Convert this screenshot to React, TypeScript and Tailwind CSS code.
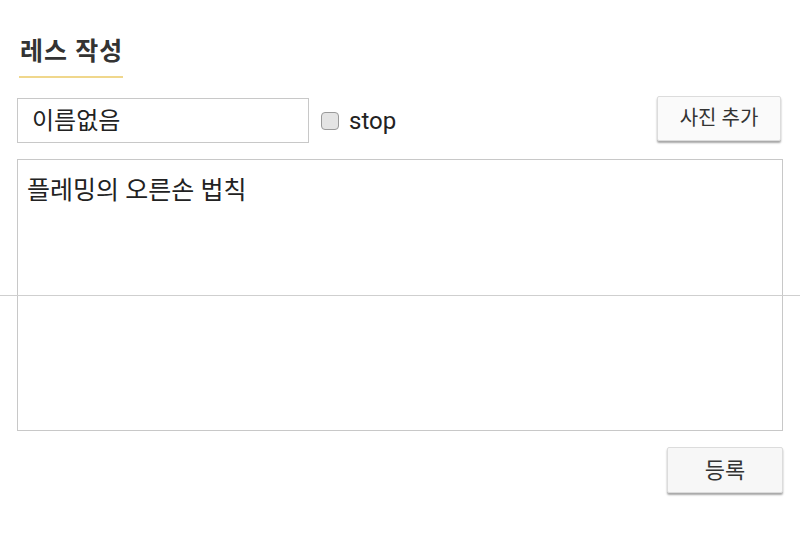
const font = "font-['Roboto','Noto_Sans_CJK_KR',sans-serif]";

export default function App() {
  return (
    <div className={`relative w-[800px] h-[541px] overflow-hidden bg-white text-[#222] ${font}`}>
      <div className="px-[17px] pt-[35px]">
        <div className="inline-block ml-[3px]">
          <h2 className="text-[25px] font-bold leading-[34px] text-[#333] tracking-[1px]">레스 작성</h2>
          <div className="mt-[7px] h-[2px] w-[104px] -ml-[1px] bg-[#f0d78c]" />
        </div>

        <div className="mt-[20px] flex items-center">
          <div className="w-[292px] h-[45px] border border-[#c8c8c8] flex items-center px-[14px] text-[24px]">
            이름없음
          </div>
          <label className="ml-[12px] flex items-center gap-[10px] text-[24px]">
            <span className="w-[18px] h-[18px] rounded-[4px] border border-[#9a9a9a] bg-[#e4e4e4]" />
            stop
          </label>
          <button className="ml-auto -mt-[5px] mr-[2px] w-[124px] h-[45px] rounded-[2px] border border-[#dcdcdc] bg-[#fafafa] text-[20px] text-[#333] shadow-[0_2px_2px_rgba(0,0,0,0.35)]">
            사진 추가
          </button>
        </div>

        <div className="mt-[16px] h-[272px] border border-[#c8c8c8] px-[9px] pt-[13px] text-[25px] leading-[35px]">
          플레밍의 오른손 법칙
        </div>

        <div className="mt-[16px] flex justify-end">
          <button className="w-[116px] h-[46px] rounded-[2px] border border-[#dcdcdc] bg-[#f7f7f7] text-[22px] text-[#333] shadow-[0_2px_2px_rgba(0,0,0,0.35)]">
            등록
          </button>
        </div>
      </div>

      <div className="absolute left-0 right-0 top-[295px] h-px bg-[#cfcfcf]" />
    </div>
  );
}
